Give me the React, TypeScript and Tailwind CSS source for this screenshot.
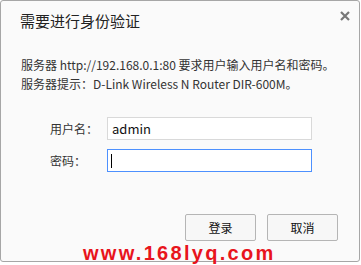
import React from "react"

export default function App() {
  return (
    <div className="w-[361px] h-[265px] bg-white relative overflow-hidden" style={{ fontFamily: '"Microsoft YaHei", "Noto Sans CJK SC", "Liberation Sans", sans-serif' }}>
      <div className="w-[360px] h-[262px] bg-[#fafafa] border border-[#a6a6a6] rounded-[3px] relative">
        <div className="flex items-start justify-between pl-[19px] pr-[9px] pt-[9px]">
          <h1 className="text-[15px] leading-[22px] text-[#222]">需要进行身份验证</h1>
          <button className="mt-[1px] text-[#777]">
            <svg width="10" height="10" viewBox="0 0 10 10">
              <path d="M1 1 L9 9 M9 1 L1 9" stroke="#777" strokeWidth="2.2" />
            </svg>
          </button>
        </div>
        <div className="pl-[20px] pt-[23px] text-[12px] leading-[19px] text-[#333]">
          <p>服务器 http://192.168.0.1:80 要求用户输入用户名和密码。</p>
          <p>服务器提示：D-Link Wireless N Router DIR-600M。</p>
        </div>
        <div className="pt-[24px] flex flex-col gap-[9px]">
          <label className="flex items-center">
            <span className="w-[106px] pl-[49px] text-[12px] text-[#333]">用户名：</span>
            <input
              defaultValue="admin"
              className="w-[205px] h-[23px] border border-[#d9d9d9] bg-white px-[4px] text-[13px] text-[#111] outline-none"
            />
          </label>
          <label className="flex items-center">
            <span className="w-[106px] pl-[49px] text-[12px] text-[#333]">密码：</span>
            <div className="w-[205px] h-[23px] border border-[#4d90fe] bg-white px-[3px] flex items-center">
              <span className="w-[1px] h-[14px] bg-black" />
            </div>
          </label>
        </div>
        <div className="flex justify-end gap-[11px] pr-[21px] pt-[42px]">
          <button className="w-[71px] h-[27px] border border-[#b5b5b5] rounded-[2px] bg-[#f7f7f7] text-[12px] text-[#111]">登录</button>
          <button className="w-[71px] h-[27px] border border-[#b5b5b5] rounded-[2px] bg-[#f7f7f7] text-[12px] text-[#111]">取消</button>
        </div>
      </div>
      <div className="absolute left-[83px] top-[243px] text-[20px] leading-[20px] font-bold text-[#e8141c] tracking-[2.3px]" style={{ fontFamily: '"Liberation Sans", Arial, sans-serif' }}>
        www.168lyq.com
      </div>
    </div>
  )
}
